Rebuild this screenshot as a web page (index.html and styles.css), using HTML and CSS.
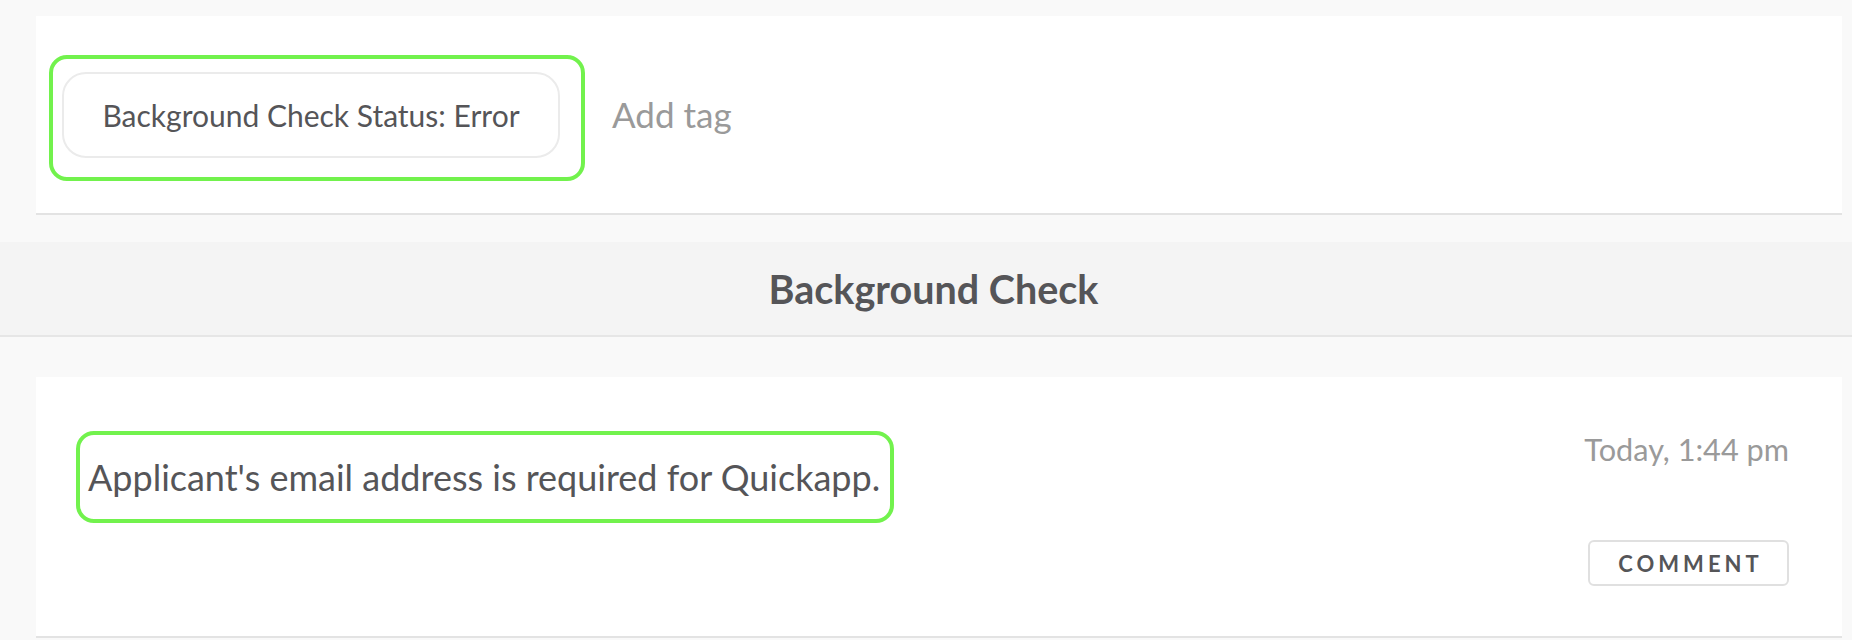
FILE: index.html
```html
<!DOCTYPE html>
<html lang="en">
<head>
<meta charset="utf-8">
<title>Background Check</title>
<link rel="stylesheet" href="styles.css">
</head>
<body>
  <section class="card tags-card">
    <div class="highlight tag-highlight">
      <span class="tag-pill">Background Check Status: Error</span>
    </div>
    <span class="add-tag">Add tag</span>
  </section>

  <header class="section-band">
    <h2 class="section-title">Background Check</h2>
  </header>

  <section class="card note-card">
    <div class="highlight note-highlight">
      <p class="note-text">Applicant's email address is required for Quickapp.</p>
    </div>
    <div class="note-meta">
      <span class="timestamp">Today, 1:44 pm</span>
      <button class="comment-btn" type="button">COMMENT</button>
    </div>
  </section>
</body>
</html>
```

FILE: styles.css
```css
html, body {
  margin: 0;
  padding: 0;
}

body {
  background: #f9f9f9;
  font-family: Lato, "Open Sans", "Liberation Sans", sans-serif;
  color: #555558;
  padding-top: 16px;
}

.card {
  background: #ffffff;
  margin: 0 10px 0 36px;
  border-bottom: 2px solid #e3e3e3;
  box-sizing: border-box;
}

.highlight {
  border: 4px solid #72f24d;
  border-radius: 18px;
  box-sizing: border-box;
}

/* ---- tags card ---- */
.tags-card {
  height: 199px;
  padding: 39px 0 0 13px;
  display: flex;
  align-items: flex-start;
}

.tag-highlight {
  height: 126px;
  padding: 13px 21px 0 9px;
}

.tag-pill {
  display: flex;
  align-items: center;
  justify-content: center;
  box-sizing: border-box;
  width: 498px;
  height: 86px;
  border: 2px solid #ebebeb;
  border-radius: 24px;
  font-size: 30px;
  color: #555558;
}

.add-tag {
  margin-left: 27px;
  align-self: flex-start;
  margin-top: 38px;
  font-size: 35px;
  color: #9a9a9a;
}

/* ---- section band ---- */
.section-band {
  margin-top: 27px;
  height: 95px;
  box-sizing: border-box;
  background: #f4f4f4;
  border-bottom: 2px solid #e6e6e6;
  display: flex;
  align-items: center;
  justify-content: center;
  padding-left: 15px;
}

.section-title {
  margin: 0;
  font-size: 39.5px;
  font-weight: 700;
  color: #555558;
}

/* ---- note card ---- */
.note-card {
  margin-top: 40px;
  height: 261px;
  padding: 54px 53px 0 40px;
  display: flex;
  justify-content: space-between;
  align-items: flex-start;
}

.note-highlight {
  height: 92px;
  padding: 0 10px 0 8px;
  display: flex;
  align-items: center;
}

.note-text {
  margin: 0;
  font-size: 36px;
  color: #555558;
}

.note-meta {
  display: flex;
  flex-direction: column;
  align-items: flex-end;
  margin-top: 0;
}

.timestamp {
  font-size: 30.7px;
  color: #9a9a9a;
}

.comment-btn {
  margin-top: 72px;
  width: 201px;
  height: 46px;
  box-sizing: border-box;
  border: 2px solid #e0e0e0;
  border-radius: 6px;
  background: #ffffff;
  font-family: Lato, "Open Sans", sans-serif;
  font-size: 22px;
  font-weight: 700;
  letter-spacing: 4px;
  color: #555558;
  padding: 0 0 0 4px;
}
```
